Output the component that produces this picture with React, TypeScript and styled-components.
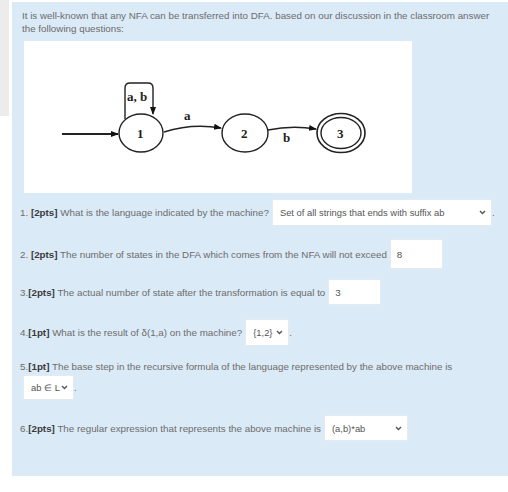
import styled, { createGlobalStyle } from "styled-components";

const GlobalStyle = createGlobalStyle`
    html, body {
        margin: 0;
        padding: 0;
        background-color: #fff;
    }
    body {
        font-family: "Liberation Sans", Arial, sans-serif;
    }
`;

const Page = styled.div`
    display: flex;
    align-items: flex-start;
    gap: 3px;
    width: 508px;
    height: 492px;
    overflow: hidden;
`;

const SideStrip = styled.div`
    width: 9px;
    height: 116px;
    background-color: #ececec;
    flex-shrink: 0;
`;

const Formulation = styled.div`
    flex: 1;
    margin-top: 2px;
    height: 474px;
    box-sizing: border-box;
    padding: 7px 8px 0 10px;
    background-color: #dbeaf7;
    color: #6c6c6c;
    font-size: 9.8px;
    line-height: 13px;
`;

const Intro = styled.p`
    margin: 0;
`;

const Figure = styled.div`
    margin: 6px 0 0 2px;
    width: 388px;
    height: 152px;
    background-color: #fff;
`;

const Question = styled.div<{ $top: number }>`
    display: flex;
    align-items: center;
    flex-wrap: wrap;
    margin-top: ${(p) => p.$top}px;
    margin-left: -2px;
    white-space: pre;
`;

const Points = styled.b`
    color: #3a3a3a;
`;

const Select = styled.div<{ $width: number; $height?: number }>`
    display: flex;
    align-items: center;
    justify-content: space-between;
    box-sizing: border-box;
    width: ${(p) => p.$width}px;
    height: ${(p) => p.$height ?? 27}px;
    margin-left: 3px;
    padding: 0 5px 0 7px;
    background-color: #fff;
    border: 1px solid #e4eaef;
    color: #555;
    font-size: 9.4px;
`;

const TextInput = styled.div<{ $height: number }>`
    display: flex;
    align-items: center;
    box-sizing: border-box;
    width: 53px;
    height: ${(p) => p.$height}px;
    margin-left: 3px;
    padding-left: 6px;
    background-color: #fff;
    border: 1px solid #e4eaef;
    color: #555;
`;

const BreakRow = styled.div`
    flex-basis: 100%;
    height: 2px;
`;

const Chevron = () => (
	<svg width="7" height="5" viewBox="0 0 7 5">
		<path d="M1 1 L3.5 3.5 L6 1" fill="none" stroke="#555" strokeWidth="1.4" />
	</svg>
);

const Diagram = () => (
	<svg width="388" height="152" viewBox="0 0 388 152">
		<defs>
			<marker id="head" markerWidth="8" markerHeight="8" refX="7" refY="4" orient="auto" markerUnits="userSpaceOnUse">
				<path d="M0 1 L8 4 L0 7 Z" fill="#111" />
			</marker>
		</defs>
		<g fill="none" stroke="#222" strokeWidth="1.4">
			<line x1="38" y1="93" x2="94" y2="93" strokeWidth="2" markerEnd="url(#head)" />
			<ellipse cx="117" cy="92" rx="22" ry="19" />
			<path d="M101 78 L101 47 Q101 42 106 42 L124 42 Q129 42 129 47 L129 73" markerEnd="url(#head)" />
			<path d="M140 91 Q168 82 197 87" markerEnd="url(#head)" />
			<ellipse cx="221" cy="92" rx="23" ry="19" />
			<path d="M244 89 Q268 84 292 88" markerEnd="url(#head)" />
			<ellipse cx="317" cy="92" rx="24" ry="19.5" strokeWidth="1.6" />
			<ellipse cx="317" cy="92" rx="20" ry="15.5" />
		</g>
		<g fontFamily="'Liberation Serif', 'DejaVu Serif', serif" fontWeight="bold" fill="#222" fontSize="13">
			<text x="103" y="60">a, b</text>
			<text x="113" y="97">1</text>
			<text x="160" y="79">a</text>
			<text x="217" y="97">2</text>
			<text x="259" y="101">b</text>
			<text x="313" y="97">3</text>
		</g>
	</svg>
);

const App = () => {
	return <>
		<GlobalStyle />
		<Page>
			<SideStrip />
			<Formulation>
				<Intro>
					It is well-known that any NFA can be transferred into DFA. based on our discussion in the classroom answer the following questions:
				</Intro>
				<Figure>
					<Diagram />
				</Figure>

				<Question $top={6}>
					1. <Points>[2pts]</Points> What is the language indicated by the machine?
					<Select $width={220}>Set of all strings that ends with suffix ab<Chevron /></Select>.
				</Question>

				<Question $top={13}>
					2. <Points>[2pts]</Points> The number of states in the DFA which comes from the NFA will not exceed
					<TextInput $height={30}>8</TextInput>
				</Question>

				<Question $top={10}>
					3.<Points>[2pts]</Points> The actual number of state after the transformation is equal to
					<TextInput $height={26}>3</TextInput>
				</Question>

				<Question $top={14}>
					4.<Points>[1pt]</Points> What is the result of δ(1,a) on the machine?
					<Select $width={44}>{"{1,2}"}<Chevron /></Select>.
				</Question>

				<Question $top={14}>
					5.<Points>[1pt]</Points> The base step in the recursive formula of the language represented by the above machine is
					<BreakRow />
					<Select $width={51} $height={25}>ab ∈ L<Chevron /></Select>.
				</Question>

				<Question $top={15}>
					6.<Points>[2pts]</Points> The regular expression that represents the above machine is
					<Select $width={84} $height={26}>(a,b)*ab<Chevron /></Select>
				</Question>
			</Formulation>
		</Page>
	</>;
};

export default App;
